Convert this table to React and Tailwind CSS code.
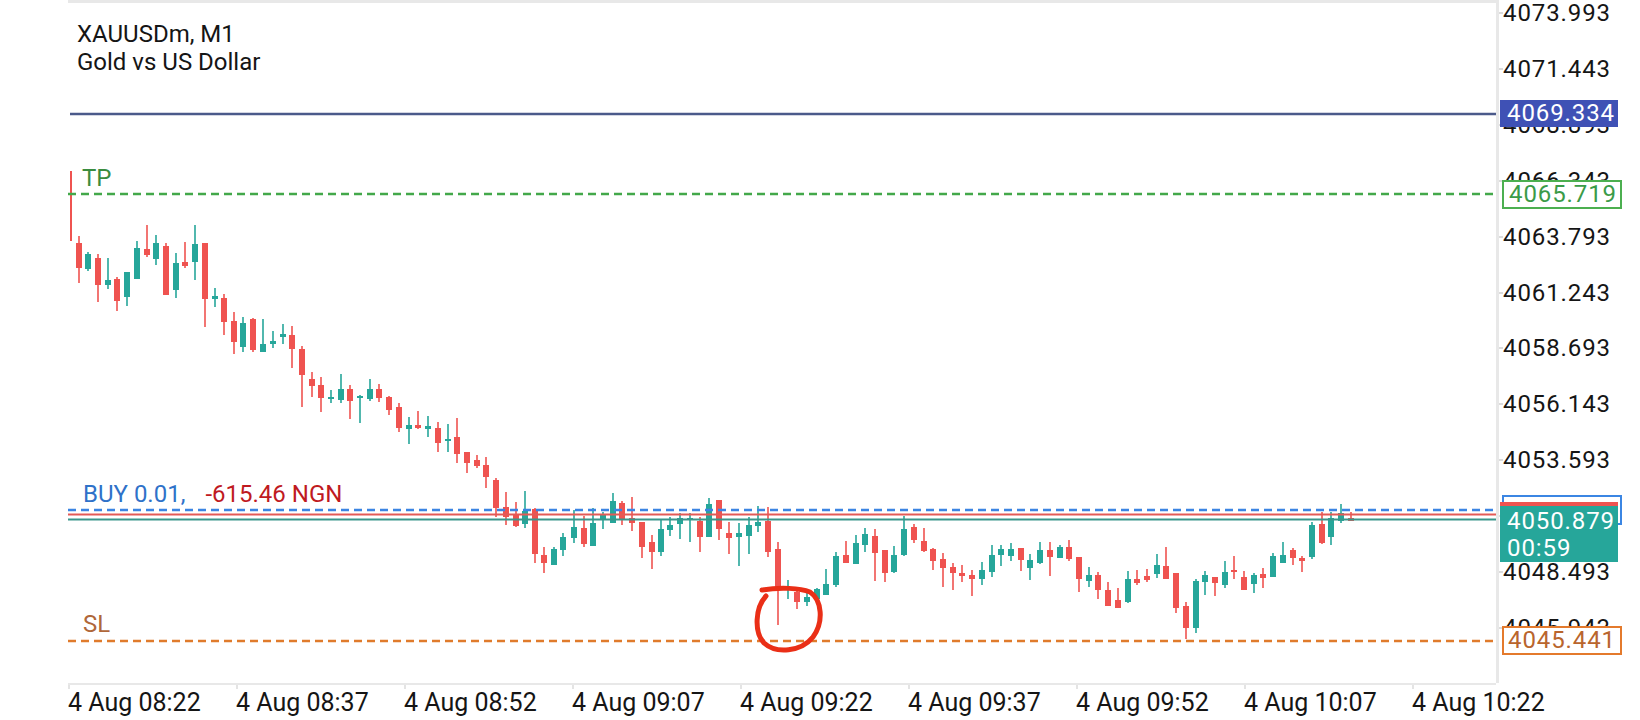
import React from 'react';

// x, red?, wickTop, wickBottom, bodyTop, bodyBottom (page pixels)
const candles = [
  [79,1,236,283,243,268],[88,0,252,271,254,269],[98,1,254,302,258,285],[108,0,258,289,280,285],
  [117,1,277,311,279,301],[127,0,272,306,272,297],[137,0,241,279,248,279],[147,1,225,257,249,255],
  [156,0,235,265,243,259],[166,1,243,295,246,295],[176,0,253,298,263,290],[185,1,242,268,262,266],
  [195,0,225,280,244,262],[205,1,243,327,243,299],[215,0,288,307,296,299],[224,1,294,335,298,322],
  [234,1,312,354,321,342],[243,0,317,352,323,347],[253,1,318,352,319,350],[263,0,319,352,344,352],
  [273,0,331,348,341,344],[283,0,324,344,334,337],[292,1,326,368,335,349],[302,1,346,407,349,375],
  [312,1,372,397,379,386],[321,1,377,412,385,398],[331,0,390,403,397,399],[341,0,374,403,389,400],
  [350,1,385,419,389,401],[360,0,395,423,396,398],[370,0,379,401,389,399],[379,1,384,402,389,398],
  [389,1,396,415,397,410],[399,1,403,432,407,428],[409,0,417,444,425,429],[418,1,411,429,425,428],
  [428,0,416,437,426,429],[438,1,422,452,428,443],[448,0,424,452,439,441],[457,1,418,463,437,454],
  [467,1,452,473,452,463],[477,1,455,468,460,466],[486,1,457,488,465,477],[496,1,478,517,480,508],
  [506,1,492,525,507,517],[516,1,502,527,514,526],[525,0,491,528,511,524],[535,1,508,563,509,554],
  [544,1,547,573,555,563],[554,0,547,565,549,565],[563,0,533,556,537,550],[574,0,510,543,527,538],
  [584,1,516,547,528,544],[593,0,508,546,523,546],[603,0,512,529,515,519],[613,0,493,523,501,523],
  [622,1,501,525,503,519],[632,1,497,531,518,523],[642,1,522,558,522,547],[652,1,535,569,542,552],
  [661,0,520,556,529,552],[670,0,517,536,525,530],[680,0,513,539,518,524],[690,0,513,542,518,519],
  [700,1,517,552,521,537],[709,0,498,537,504,537],[719,1,500,540,500,529],[729,1,522,554,533,538],
  [739,0,523,566,533,537],[749,0,517,554,525,536],[758,0,506,532,522,526],[768,1,507,557,521,552],
  [778,1,542,625,549,590],[788,0,580,599,587,589],[797,1,591,609,592,602],[807,0,593,606,597,602],
  [817,0,588,600,589,599],[826,0,569,595,584,595],[836,0,552,587,556,585],[846,1,541,563,555,563],
  [856,0,535,564,543,564],[865,0,528,552,534,545],[875,1,529,581,536,553],[885,1,550,582,550,573],
  [894,0,546,573,555,572],[904,0,516,556,529,555],[914,1,524,543,527,540],[924,1,528,552,541,551],
  [933,1,548,570,549,561],[943,1,553,587,559,568],[953,1,563,590,567,573],[962,1,565,582,573,576],
  [972,1,570,596,575,579],[982,0,562,585,570,579],[992,0,545,577,555,572],[1001,0,545,566,549,555],
  [1011,0,543,561,549,556],[1021,1,548,571,548,560],[1030,0,554,580,560,568],[1040,0,542,564,550,563],
  [1050,1,542,576,550,557],[1060,0,545,558,547,558],[1069,1,540,561,547,559],[1079,1,557,592,557,579],
  [1089,0,567,587,575,581],[1098,1,572,599,575,590],[1108,1,582,606,590,606],[1118,1,588,608,600,608],
  [1128,0,571,603,579,602],[1137,1,570,585,579,583],[1147,1,569,582,576,580],[1157,0,554,578,565,574],
  [1166,1,547,579,566,579],[1176,1,573,613,573,608],[1186,1,602,639,606,628],[1196,0,579,633,581,628],
  [1205,0,571,595,575,582],[1215,1,577,596,577,583],[1225,0,561,588,572,585],[1234,1,556,579,570,572],
  [1244,1,571,590,577,590],[1254,0,573,593,575,584],[1263,1,568,588,574,578],[1273,0,553,577,556,577],
  [1283,0,542,563,555,563],[1293,1,548,565,550,558],[1302,1,556,572,558,561],[1312,0,522,559,525,557],
  [1322,1,512,544,524,543],[1331,0,512,545,518,537],[1341,0,504,523,513,521],[1351,1,512,521,518,521],
];

const priceLabels = [
  '4073.993', '4071.443', '4068.893', '4066.343', '4063.793', '4061.243',
  '4058.693', '4056.143', '4053.593', '4051.043', '4048.493', '4045.943',
];

const timeLabels = ['08:22', '08:37', '08:52', '09:07', '09:22', '09:37', '09:52', '10:07', '10:22'];

const RED = '#ef5350';
const TEAL = '#26a69a';

const Chart = () => (
  <svg className="absolute inset-0" width="1428" height="680" viewBox="68 3 1428 680">
    <line x1="71" y1="171" x2="71" y2="241" stroke={RED} strokeWidth="2" />
    {candles.map(([x, red, wt, wb, bt, bb]) => {
      const c = red ? RED : TEAL;
      return (
        <g key={x}>
          <line x1={x} y1={wt} x2={x} y2={wb} stroke={c} strokeWidth="1.6" />
          <rect x={x - 3} y={bt} width="6" height={Math.max(2, bb - bt)} fill={c} />
        </g>
      );
    })}
    <line x1="70" y1="114" x2="1496" y2="114" stroke="#4b5a8a" strokeWidth="2.5" />
    <line x1="68" y1="194" x2="1496" y2="194" stroke="#43a84a" strokeWidth="2.7" strokeDasharray="8 5" />
    <line x1="68" y1="510" x2="1496" y2="510" stroke="#3b84e2" strokeWidth="2.7" strokeDasharray="8 5" />
    <line x1="68" y1="514.5" x2="1496" y2="514.5" stroke="#e35a57" strokeWidth="2" />
    <line x1="68" y1="519.5" x2="1496" y2="519.5" stroke="#3a968b" strokeWidth="2" />
    <line x1="68" y1="641" x2="1496" y2="641" stroke="#e07b2c" strokeWidth="2.7" strokeDasharray="8 5" />
    <path
      d="M762 590 C780 587, 800 588, 810 592 C822 600, 824 622, 813 637 C801 652, 776 654, 764 643 C754 632, 755 608, 766 596"
      fill="none"
      stroke="#ea2f17"
      strokeWidth="5"
      strokeLinecap="round"
      strokeLinejoin="round"
    />
  </svg>
);

export default function App() {
  return (
    <div className="w-[1640px] h-[720px] bg-white overflow-hidden text-[#151515] font-['Roboto','Liberation_Sans',sans-serif]">
      <div className="flex h-[685px]">
        <div className="w-[68px] shrink-0" />
        <div className="relative w-[1428px] shrink-0 border-t-[3px] border-b-2 border-[#e8e8e8]">
          <Chart />
          <div className="absolute left-[9px] top-[17px] text-[24px] leading-[28px]">
            <div>XAUUSDm, M1</div>
            <div>Gold vs US Dollar</div>
          </div>
          <div className="absolute left-[14px] top-[163px] text-[24px] leading-[24px] text-[#3a8c40]">TP</div>
          <div className="absolute left-[15px] top-[479px] flex text-[24px] leading-[24px]">
            <span className="text-[#2f72c9]">BUY 0.01,</span>
            <span className="ml-[20px] text-[#bf1a1f]">-615.46 NGN</span>
          </div>
          <div className="absolute left-[15px] top-[609px] text-[24px] leading-[24px] text-[#b0673a]">SL</div>
        </div>
        <div className="w-[3px] h-[683px] shrink-0 bg-[#e8e8e8]" />
        <div className="relative flex-1 h-[683px] text-[24px] leading-[24px] tracking-[0.9px]">
          {priceLabels.map((p, i) => (
            <div
              key={p}
              className="absolute left-0 flex items-center"
              style={{ top: Math.round(1 + i * 55.9) }}
            >
              <div className="w-[4px] h-[2px] bg-[#dcdcdc]" />
              <span>{p}</span>
            </div>
          ))}
          <div className="absolute left-[1px] top-[100px] w-[118px] h-[27px] bg-[#3f51b5] pl-[7px] leading-[27px] text-white">
            4069.334
          </div>
          <div className="absolute left-[3px] top-[180px] w-[120px] h-[29px] border-2 border-[#4caf50] bg-white pl-[5px] leading-[25px] text-[#3a9b48]">
            4065.719
          </div>
          <div className="absolute left-[3px] top-[495px] w-[120px] h-[30px] border-2 border-[#3b86e3] bg-white" />
          <div className="absolute left-[1px] top-[502px] w-[118px] h-[60px] border-t-4 border-[#ef5350] bg-[#26a69a] pl-[7px] pt-[2px] leading-[27px] text-white">
            <div>4050.879</div>
            <div>00:59</div>
          </div>
          <div className="absolute left-[3px] top-[626px] w-[120px] h-[29px] border-2 border-[#e47a2c] bg-white pl-[4px] leading-[25px] text-[#b9652d]">
            4045.441
          </div>
        </div>
      </div>
      <div className="flex pl-[68px]">
        {timeLabels.map((t) => (
          <div key={t} className="w-[168px] shrink-0 flex flex-col">
            <div className="w-[2px] h-[4px] bg-[#e4e4e4]" />
            <div className="mt-[1px] text-[25px] leading-[25px] whitespace-nowrap">4 Aug {t}</div>
          </div>
        ))}
      </div>
    </div>
  );
}
